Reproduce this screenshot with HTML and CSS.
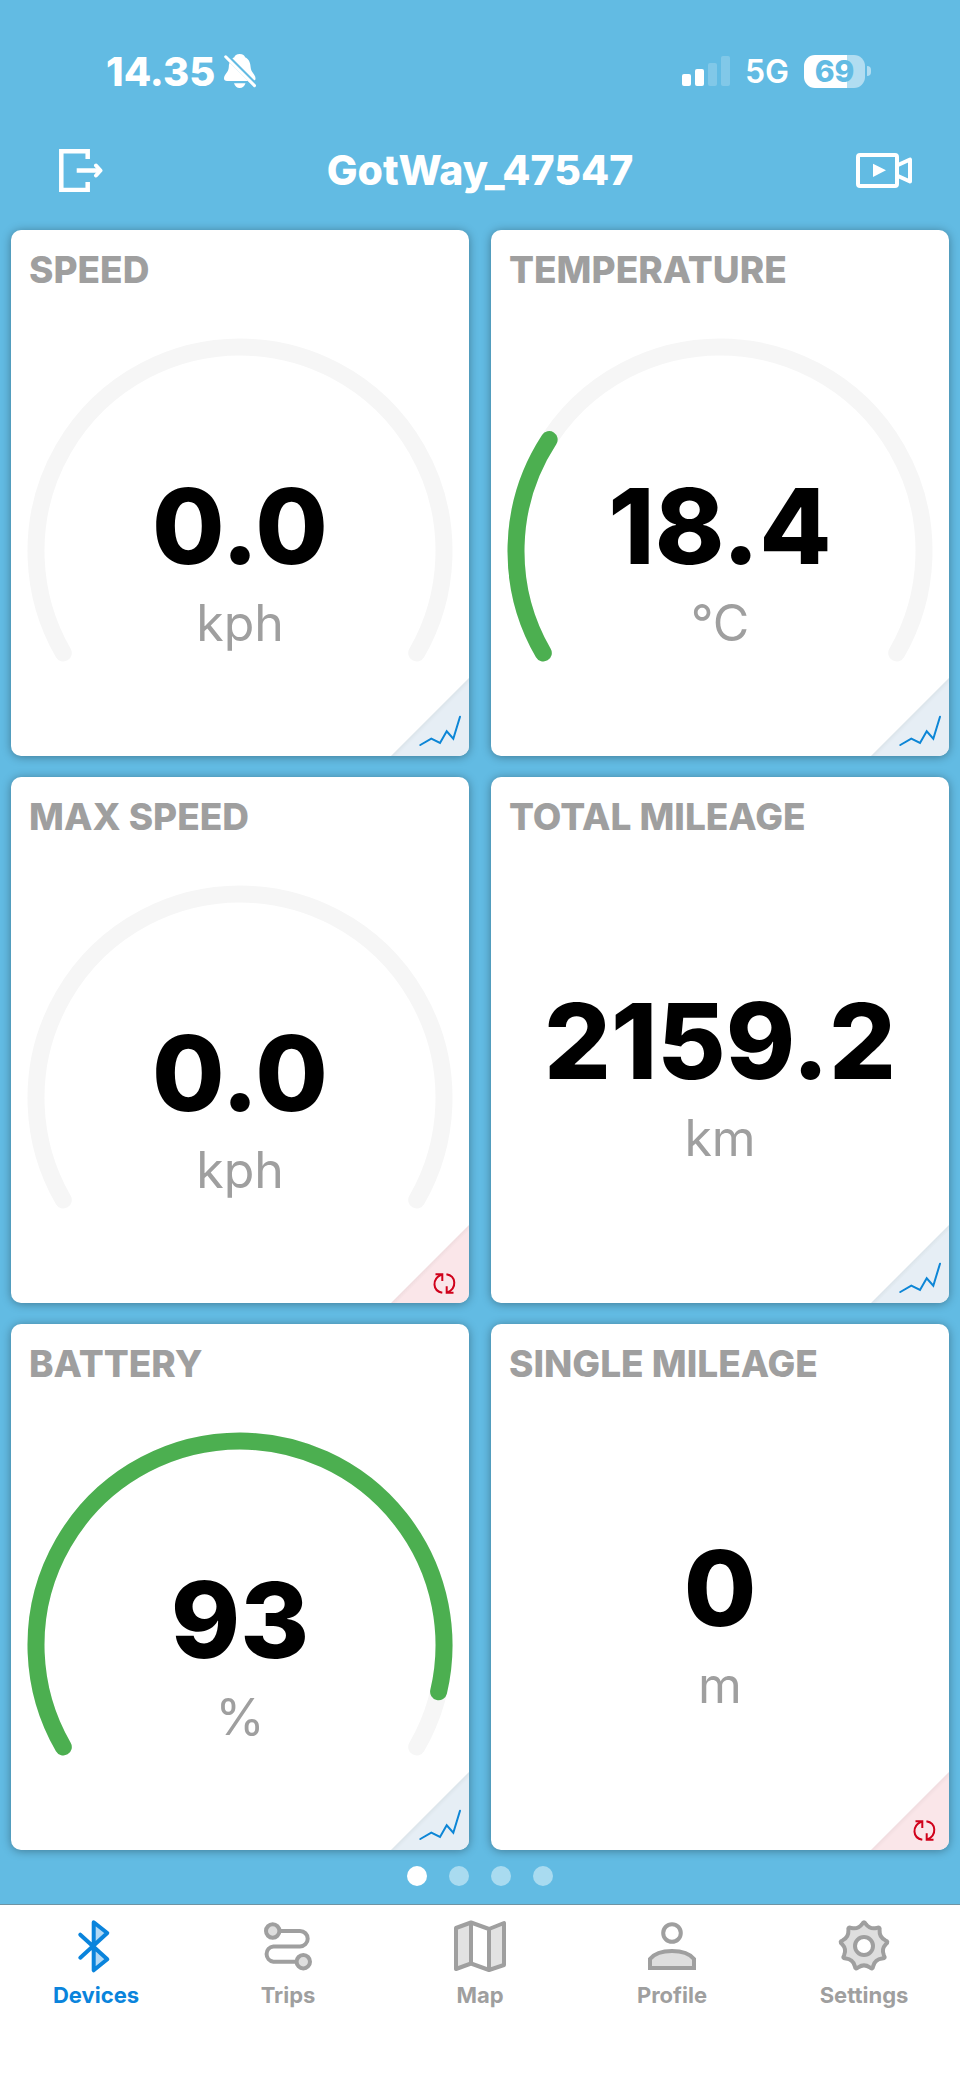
FILE: index.html
```html
<!DOCTYPE html>
<html lang="en">
	<head>
		<meta charset="UTF-8">
		<meta name="viewport" content="width=device-width, initial-scale=1">
		<title>GotWay_47547</title>
		<link rel="stylesheet" href="styles.css">
	</head>
	<body>
		<svg class="defs" aria-hidden="true">
			<symbol id="chart" viewBox="0 0 78 78">
				<path d="M29.3 67 40.3 60.7 49 65 55.7 53.3 62.3 60.7 69 38.7" fill="none" stroke="currentColor" stroke-width="2" stroke-linecap="round"/>
			</symbol>
			<symbol id="reset" viewBox="0 0 78 78">
				<path d="M51.3 67.8C41.5 66 40.5 54 50.5 49.6M44.5 49.3H51.3V56M55.4 49.3C65.2 51 66.2 63 56.4 67.5M62.5 67.8H55.7V61.2" fill="none" stroke="currentColor" stroke-width="2"/>
			</symbol>
		</svg>

		<div class="status">
			<span class="time">14.35</span>
			<svg class="bell" width="32" height="34" viewBox="0 0 32 34">
				<path d="M15.7 0C12.500 0 10.800 1.500 10.300 3.200 6.500 5 5 9 4.800 13 4.500 19 0 20 0 24.500 0 26 1 27 3 27H28.500C30.500 27 31.500 26 31.500 24.500 31.500 20 27 19 26.600 13 26.400 9 25 5 21.100 3.200 20.600 1.500 19 0 15.700 0ZM10 29.300H21.500C20.500 32.500 18.500 34 15.700 34S11 32.500 10 29.300Z" fill="#fff"/>
				<path d="M2 1.500 32 31.500" stroke="#62bbe3" stroke-width="5"/>
				<path d="M1.700 2.800 30.500 31.600" stroke="#fff" stroke-width="3" stroke-linecap="round"/>
			</svg>
			<svg class="signal" width="48" height="30" viewBox="0 0 48 30" fill="#fff">
				<rect x="0" y="18" width="9" height="12" rx="2"/>
				<rect x="13" y="13" width="9" height="17" rx="2"/>
				<rect x="26" y="7" width="9" height="23" rx="2" opacity=".2"/>
				<rect x="39" y="0" width="9" height="30" rx="2" opacity=".2"/>
			</svg>
			<span class="network">5G</span>
			<span class="charge"><b>69</b></span>
			<i class="nub"></i>
		</div>

		<header class="bar">
			<button class="bar-btn left" aria-label="Disconnect">
				<svg width="44" height="43" viewBox="0 0 44 43" fill="none" stroke="#fff" stroke-width="4.500">
					<path d="M28.700 10V2.300H2.300V41H28.700V33"/>
					<path d="M17.700 21.500H41"/>
					<path d="M37 16.500 41.500 21.500 37 26.500" stroke-linecap="round" stroke-linejoin="round" stroke-width="4"/>
				</svg>
			</button>
			<h1>GotWay_47547</h1>
			<button class="bar-btn right" aria-label="Record video">
				<svg width="56" height="35" viewBox="0 0 56 35" fill="none" stroke="#fff" stroke-width="4">
					<rect x="2" y="2" width="39" height="31" rx="2"/>
					<path d="M42 12 54 6.500V28.500L42 23" stroke-linejoin="round"/>
					<path d="M17 10.700 30 17.300 17 24Z" fill="#fff" stroke="none"/>
				</svg>
			</button>
		</header>

		<main class="cards">
			<section class="card">
				<h2>SPEED</h2>
				<div class="body">
					<svg class="gauge" viewBox="0 0 458 458">
						<path class="track" d="M52.300 355A204 204 0 1 1 405.700 355"/>
					</svg>
					<p class="readout"><b>0.0</b><span>kph</span></p>
				</div>
				<button class="corner" aria-label="Speed chart"><svg><use href="#chart"/></svg></button>
			</section>
			<section class="card">
				<h2>TEMPERATURE</h2>
				<div class="body">
					<svg class="gauge" viewBox="0 0 458 458">
						<path class="track" d="M52.300 355A204 204 0 1 1 405.700 355"/>
						<path class="level" d="M52.300 355A204 204 0 1 1 405.700 355" pathLength="100" stroke-dasharray="26.300 200"/>
					</svg>
					<p class="readout"><b>18.4</b><span>°C</span></p>
				</div>
				<button class="corner" aria-label="Temperature chart"><svg><use href="#chart"/></svg></button>
			</section>
			<section class="card">
				<h2>MAX SPEED</h2>
				<div class="body">
					<svg class="gauge" viewBox="0 0 458 458">
						<path class="track" d="M52.300 355A204 204 0 1 1 405.700 355"/>
					</svg>
					<p class="readout"><b>0.0</b><span>kph</span></p>
				</div>
				<button class="corner reset" aria-label="Reset max speed"><svg><use href="#reset"/></svg></button>
			</section>
			<section class="card">
				<h2>TOTAL MILEAGE</h2>
				<div class="body">
					<p class="readout plain"><b>2159.2</b><span>km</span></p>
				</div>
				<button class="corner" aria-label="Total mileage chart"><svg><use href="#chart"/></svg></button>
			</section>
			<section class="card">
				<h2>BATTERY</h2>
				<div class="body">
					<svg class="gauge" viewBox="0 0 458 458">
						<path class="track" d="M52.300 355A204 204 0 1 1 405.700 355"/>
						<path class="level" d="M52.300 355A204 204 0 1 1 405.700 355" pathLength="100" stroke-dasharray="93 200"/>
					</svg>
					<p class="readout"><b>93</b><span>%</span></p>
				</div>
				<button class="corner" aria-label="Battery chart"><svg><use href="#chart"/></svg></button>
			</section>
			<section class="card">
				<h2>SINGLE MILEAGE</h2>
				<div class="body">
					<p class="readout plain"><b>0</b><span>m</span></p>
				</div>
				<button class="corner reset" aria-label="Reset single mileage"><svg><use href="#reset"/></svg></button>
			</section>
		</main>

		<div class="dots">
			<button class="on" aria-label="Page 1"></button>
			<button aria-label="Page 2"></button>
			<button aria-label="Page 3"></button>
			<button aria-label="Page 4"></button>
		</div>

		<nav class="tabs">
			<a class="active" href="#devices">
				<svg viewBox="0 0 52 52">
					<path class="tint" d="M23.700 2.300 37.300 13 23.700 26.200 37.300 39.300 23.700 50.300Z"/>
					<path d="M10.300 14.700 37.300 39.300 23.700 50.300V2.300L37.300 13 10.300 37.700"/>
				</svg>
				Devices
			</a>
			<a href="#trips">
				<svg viewBox="0 0 52 52">
					<path d="M17 11H38A7.700 7.700 0 0 1 38 26.400H11.400A7.700 7.700 0 0 0 11.400 41.700H35"/>
					<circle class="both" cx="10.700" cy="11" r="6.700"/>
					<circle class="both" cx="41.300" cy="41.700" r="6.700"/>
				</svg>
				Trips
			</a>
			<a href="#map">
				<svg viewBox="0 0 52 52">
					<path class="tint" d="M2 8 17 2.500V43.500L2 49ZM35 9 50 3V45L35 50Z"/>
					<path d="M2 8 17 2.500 35 9 50 3V45L35 50 17 43.500 2 49ZM17 2.500V43.500M35 9V50"/>
				</svg>
				Map
			</a>
			<a href="#profile">
				<svg viewBox="0 0 52 52">
					<circle cx="26" cy="13" r="8.800"/>
					<path class="both sharp" d="M4 48V39C8 34 16 31 26 31S44 34 48 39V48Z"/>
				</svg>
				Profile
			</a>
			<a href="#settings">
				<svg viewBox="0 0 52 52">
					<path class="both" d="M27.900 4.100Q32 9.600 38.600 8 42.400 6.500 41.600 10.400 41.200 17.300 47.300 20.300 51.100 21.600 47.900 24.100 43.200 29 45.900 35.300 48.100 38.800 44 38.600 37.200 39.400 35.300 45.900 34.700 50 31.700 47.300 26 43.500 20.300 47.300 17.300 50 16.700 45.900 14.800 39.400 8 38.600 3.900 38.800 6.100 35.300 8.800 29 4.100 24.100 .900 21.600 4.700 20.300 10.800 17.300 10.400 10.400 9.600 6.500 13.400 8 20 9.600 24.100 4.100 26 .500 27.900 4.100Z"/>
					<circle class="hole" cx="26" cy="26" r="9"/>
				</svg>
				Settings
			</a>
		</nav>
	</body>
</html>
```
FILE: styles.css
```css
*{
	box-sizing: border-box;
}
html{
	height: 100%;
}
body{
	margin: 0;
	min-height: 100%;
	display: flex;
	flex-direction: column;
	background: #62bbe3;
	font-family: Inter, "Liberation Sans", sans-serif;
}
button{
	border: 0;
	padding: 0;
	background: none;
	cursor: pointer;
}
svg{
	display: block;
}
.defs{
	display: none;
}

/* status bar */
.status{
	display: flex;
	align-items: center;
	height: 120px;
	padding: 22px 89px 0 106px;
	color: #fff;
}
.time{
	font-size: 40px;
	font-weight: 800;
}
.bell{
	margin-left: 9px;
}
.signal{
	margin-left: auto;
}
.network{
	margin: 0 15px;
	font-size: 32px;
	font-weight: 600;
}
.charge{
	width: 61px;
	height: 33px;
	border-radius: 11px;
	background: linear-gradient(90deg, #fff 70%, #b1ddf1 70%);
	color: #62bbe3;
	font-size: 30px;
	line-height: 33px;
	text-align: center;
}
.charge b{
	font-weight: 800;
}
.nub{
	width: 4px;
	height: 10px;
	margin-left: 2px;
	border-radius: 0 5px 5px 0;
	background: #b1ddf1;
}

/* title bar */
.bar{
	display: grid;
	grid-template-columns: 1fr auto 1fr;
	align-items: center;
	height: 100px;
	padding: 0 48px;
}
.bar-btn{
	justify-self: start;
}
.bar-btn.left{
	padding: 0 11px;
}
.bar-btn.right{
	justify-self: end;
}
h1{
	margin: 0;
	color: #fff;
	font-size: 41px;
	font-weight: 800;
}

/* cards */
.cards{
	display: grid;
	grid-template-columns: 1fr 1fr;
	gap: 21px 22px;
	padding: 10px 11px 0;
}
.card{
	position: relative;
	display: flex;
	flex-direction: column;
	overflow: hidden;
	border-radius: 10px;
	background: #fff;
	box-shadow: 0 1px 10px rgba(0,0,0,.35);
}
h2{
	margin: 0;
	padding: 18px 18px 6px;
	color: #9f9f9f;
	font-size: 37px;
	font-weight: 800;
	line-height: 44px;
}
.body{
	flex: 1;
	display: grid;
	align-items: center;
}
.gauge,
.readout{
	grid-area: 1 / 1;
}
.gauge{
	width: 100%;
	fill: none;
	stroke-width: 17;
	stroke-linecap: round;
}
.track{
	stroke: #f6f6f6;
}
.level{
	stroke: #4caf50;
}
.readout{
	margin: 0;
	padding-top: 65px;
	text-align: center;
}
.readout.plain{
	padding-top: 2px;
}
.readout b{
	display: block;
	font-size: 105px;
	font-weight: 800;
	line-height: 126px;
}
.readout span{
	display: block;
	color: #9f9f9f;
	font-size: 50px;
	font-weight: 400;
	line-height: 68px;
}
.corner{
	position: absolute;
	right: 0;
	bottom: 0;
	width: 78px;
	height: 78px;
	background: linear-gradient(135deg, #dbe4ea 50%, #e6eef5 54%);
	color: #0d86d6;
	clip-path: polygon(100% 0, 100% 100%, 0 100%);
}
.corner svg{
	width: 78px;
	height: 78px;
}
.corner.reset{
	background: linear-gradient(135deg, #f0dcdf 50%, #fae6e9 54%);
	color: #d0021b;
}

.dots{
	display: flex;
	justify-content: center;
	gap: 22px;
	padding: 16px 0 18px;
}
.dots button{
	width: 20px;
	height: 20px;
	border-radius: 50%;
	background: #a9dbf0;
}
.dots .on{
	background: #fff;
}

/* bottom tabs */
.tabs{
	flex: 1;
	display: flex;
	border-top: 1px solid #6f93a3;
	background: #fff;
}
.tabs a{
	flex: 1;
	display: flex;
	flex-direction: column;
	align-items: center;
	gap: 11px;
	padding-top: 15px;
	color: #9f9f9f;
	font-size: 22px;
	font-weight: 700;
	line-height: 24px;
	text-decoration: none;
}
.tabs .active{
	color: #0a84dc;
}
.tabs svg{
	width: 52px;
	height: 52px;
	overflow: visible;
	fill: none;
	stroke: currentColor;
	stroke-width: 4;
	stroke-linecap: round;
	stroke-linejoin: round;
}
.tabs .tint{
	fill: #e2e2e2;
	stroke: none;
}
.tabs .active .tint{
	fill: #b3d9f5;
}
.tabs .both{
	fill: #dedede;
}
.tabs .sharp{
	stroke-linejoin: miter;
}
.tabs .hole{
	fill: #fff;
}
```
